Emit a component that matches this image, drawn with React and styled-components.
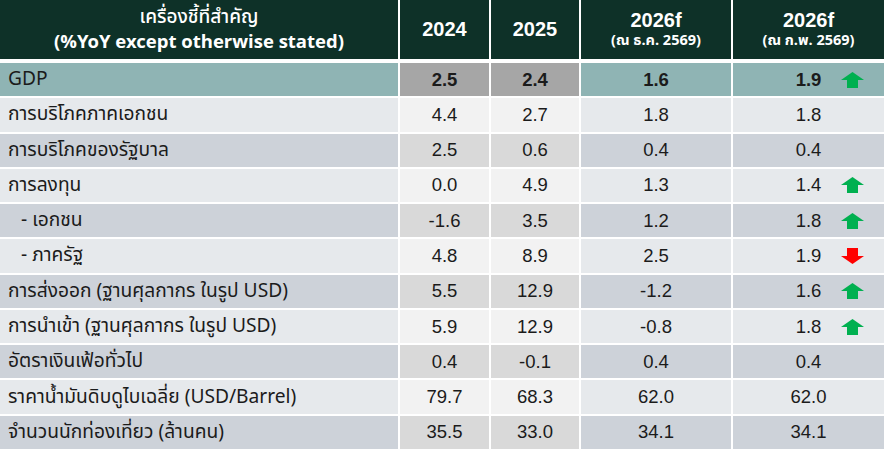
import React from "react";
import styled, { createGlobalStyle } from "styled-components";

const Global = createGlobalStyle`
  html, body { margin: 0; padding: 0; background: #ffffff; }
  #root { width: 884px; height: 449px; overflow: hidden; }
`;

const thai = `"Noto Sans Thai", "Leelawadee UI", "Noto Sans", "Open Sans", sans-serif`;
const arial = `"Liberation Sans", Arial, sans-serif`;

const Table = styled.div`
  display: grid;
  grid-template-columns: 398px 89px 88px 150px 151px;
  grid-template-rows: 59px 4px repeat(11, 1fr);
  column-gap: 2px;
  height: 449px;
  width: 884px;
  background: #ffffff;
`;

const Body = styled.div`
  grid-column: 1 / -1;
  grid-row: 3 / -1;
  display: grid;
  grid-template-columns: subgrid;
  grid-template-rows: repeat(11, 1fr);
  row-gap: 2px;
`;

const HeadCell = styled.div`
  background: #0e3128;
  color: #ffffff;
  display: flex;
  flex-direction: column;
  align-items: center;
  justify-content: center;
  text-align: center;
`;

const HeadThai = styled.div`
  font-family: ${thai};
  font-weight: ${(p) => (p.$thin ? 500 : 700)};
  font-size: ${(p) => (p.$thin ? "19px" : "18.5px")};
  line-height: 24px;
  margin-top: ${(p) => (p.$thin ? "1px" : "0")};
  white-space: nowrap;
`;

const HeadYear = styled.div`
  font-family: ${arial};
  font-weight: 700;
  font-size: 20px;
  line-height: 23px;
`;

const HeadSub = styled.div`
  font-family: ${thai};
  font-weight: 700;
  font-size: 14.5px;
  line-height: 19px;
  white-space: nowrap;
`;

const bgFor = (kind, shade) => {
  if (kind === "gdp") return "#8fb4b4";
  if (kind === "gdpYear") return "#a6a6a6";
  if (kind === "year") return shade ? "#d9d9d9" : "#f2f2f2";
  return shade ? "#cdd2d9" : "#e6e9ec";
};

const Label = styled.div`
  background: ${(p) => bgFor(p.$kind, p.$shade)};
  font-family: ${thai};
  font-size: 19.2px;
  color: #1b1b1b;
  display: flex;
  align-items: center;
  padding-left: ${(p) => (p.$sub ? "21px" : "8px")};
  white-space: nowrap;
`;

const Num = styled.div`
  position: relative;
  background: ${(p) => bgFor(p.$kind, p.$shade)};
  font-family: ${arial};
  font-size: 18.5px;
  font-weight: ${(p) => (p.$bold ? 700 : 400)};
  color: #1b1b1b;
  display: flex;
  align-items: center;
  justify-content: center;
`;

const ArrowBox = styled.svg`
  position: absolute;
  right: 20px;
  top: 50%;
  transform: translateY(-50%);
`;

const Arrow = ({ dir }) =>
  dir === "up" ? (
    <ArrowBox width="23" height="16" viewBox="0 0 23 16">
      <polygon points="11.5,0 23,8 17,8 17,16 6,16 6,8 0,8" fill="#00b050" />
    </ArrowBox>
  ) : (
    <ArrowBox width="23" height="16" viewBox="0 0 23 16">
      <polygon points="6,0 17,0 17,8 23,8 11.5,16 0,8 6,8" fill="#ff0000" />
    </ArrowBox>
  );

const rows = [
  { label: "GDP", v: ["2.5", "2.4", "1.6", "1.9"], arrow: "up", gdp: true },
  { label: "การบริโภคภาคเอกชน", v: ["4.4", "2.7", "1.8", "1.8"] },
  { label: "การบริโภคของรัฐบาล", v: ["2.5", "0.6", "0.4", "0.4"] },
  { label: "การลงทุน", v: ["0.0", "4.9", "1.3", "1.4"], arrow: "up" },
  { label: "- เอกชน", v: ["-1.6", "3.5", "1.2", "1.8"], arrow: "up", sub: true },
  { label: "- ภาครัฐ", v: ["4.8", "8.9", "2.5", "1.9"], arrow: "down", sub: true },
  { label: "การส่งออก (ฐานศุลกากร ในรูป USD)", v: ["5.5", "12.9", "-1.2", "1.6"], arrow: "up" },
  { label: "การนำเข้า (ฐานศุลกากร ในรูป USD)", v: ["5.9", "12.9", "-0.8", "1.8"], arrow: "up" },
  { label: "อัตราเงินเฟ้อทั่วไป", v: ["0.4", "-0.1", "0.4", "0.4"] },
  { label: "ราคาน้ำมันดิบดูไบเฉลี่ย (USD/Barrel)", v: ["79.7", "68.3", "62.0", "62.0"] },
  { label: "จำนวนนักท่องเที่ยว (ล้านคน)", v: ["35.5", "33.0", "34.1", "34.1"] },
];

export default function App() {
  return (
    <>
      <Global />
      <Table>
        <HeadCell>
          <HeadThai $thin>เครื่องชี้ที่สำคัญ</HeadThai>
          <HeadThai>(%YoY except otherwise stated)</HeadThai>
        </HeadCell>
        <HeadCell>
          <HeadYear>2024</HeadYear>
        </HeadCell>
        <HeadCell>
          <HeadYear>2025</HeadYear>
        </HeadCell>
        <HeadCell>
          <HeadYear>2026f</HeadYear>
          <HeadSub>(ณ ธ.ค. 2569)</HeadSub>
        </HeadCell>
        <HeadCell>
          <HeadYear>2026f</HeadYear>
          <HeadSub>(ณ ก.พ. 2569)</HeadSub>
        </HeadCell>
        <Body>
          {rows.map((r, i) => {
            const shade = !r.gdp && i % 2 === 0;
            return (
              <React.Fragment key={i}>
                <Label $kind={r.gdp ? "gdp" : "label"} $shade={shade} $sub={r.sub}>
                  {r.label}
                </Label>
                {r.v.map((val, j) => (
                  <Num
                    key={j}
                    $bold={r.gdp}
                    $shade={shade}
                    $kind={r.gdp ? (j < 2 ? "gdpYear" : "gdp") : j < 2 ? "year" : "label"}
                  >
                    {val}
                    {j === 3 && r.arrow && <Arrow dir={r.arrow} />}
                  </Num>
                ))}
              </React.Fragment>
            );
          })}
        </Body>
      </Table>
    </>
  );
}
